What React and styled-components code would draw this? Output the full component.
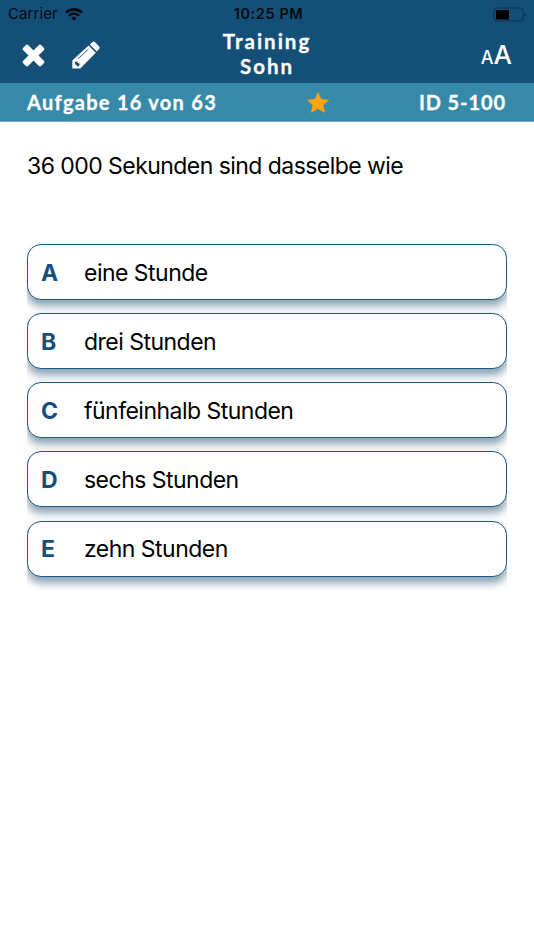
import React from 'react';
import styled, { createGlobalStyle } from 'styled-components';

const GlobalStyle = createGlobalStyle`
  * {
    box-sizing: border-box;
  }
  body {
    margin: 0;
    background: #fff;
    font-family: Inter, "Liberation Sans", sans-serif;
  }
`

const Screen = styled.div`
  min-height: 950px;
  background: #fff;
`
const Header = styled.header`
  height: 83px;
  background: #144f78;
`
const StatusBar = styled.div`
  display: grid;
  grid-template-columns: 1fr auto 1fr;
  align-items: center;
  height: 27px;
  padding: 0 7px 0 8px;
  color: #030a10;
  font-size: 15px;
  line-height: 28px;
`
const Carrier = styled.div`
  display: flex;
  align-items: center;
  gap: 7px;
  letter-spacing: 0.1px;
`
const Clock = styled.div`
  padding-left: 2px;
  font-weight: 600;
  font-size: 14.5px;
  letter-spacing: 0.6px;
`
const Battery = styled.svg`
  justify-self: end;
`
const NavBar = styled.div`
  display: grid;
  grid-template-columns: 1fr auto 1fr;
  height: 56px;
  padding: 0 22px;
`
const Tools = styled.div`
  display: flex;
  align-items: flex-start;
  padding-top: 14px;
  gap: 27px;
`
const Title = styled.h1`
  margin: 0;
  padding-top: 2px;
  color: #fff;
  font: 700 20.5px/25px Lato, sans-serif;
  letter-spacing: 2px;
  text-align: center;
  -webkit-text-stroke: 0.3px #fff;
`
const FontSize = styled.div`
  justify-self: end;
  padding-top: 10px;
  color: #fff;
  font-weight: 500;
  font-size: 26px;
  line-height: 36px;
  small {
    font-size: 18px;
  }
`
const InfoBar = styled.div`
  display: flex;
  align-items: center;
  justify-content: space-between;
  height: 39px;
  padding: 0 28px 0 27px;
  border-bottom: 1px solid #77aec2;
  background: #368aa8;
  color: #fff;
  font: 700 20px/38px Lato, sans-serif;
  letter-spacing: 1.28px;
  -webkit-text-stroke: 0.3px #fff;
`
const TaskId = styled.span`
  letter-spacing: 0.9px;
`
const Question = styled.p`
  margin: 0;
  padding: 29px 27px 0;
  height: 122px;
  font-size: 23px;
  line-height: 30px;
  letter-spacing: -0.55px;
`
const Answers = styled.ul`
  margin: 0 27px;
  padding: 0;
  overflow: hidden;
  list-style: none;
`
const Answer = styled.li`
  display: flex;
  align-items: center;
  height: 56px;
  margin-bottom: 13.15px;
  padding: 1px 0 0 13px;
  border: 1.5px solid #1b5a84;
  border-radius: 14px;
  background: #fff;
  box-shadow: 0 6px 8px rgba(20, 67, 100, 0.5);
  font-size: 23px;
  letter-spacing: -0.52px;
`
const Letter = styled.b`
  width: 43px;
  color: #144f7c;
  font-weight: 700;
`

const answers = [
  { id: 'A', text: 'eine Stunde' },
  { id: 'B', text: 'drei Stunden' },
  { id: 'C', text: 'fünfeinhalb Stunden' },
  { id: 'D', text: 'sechs Stunden' },
  { id: 'E', text: 'zehn Stunden' },
]

const WifiIcon = () => (
  <svg width="18" height="13" viewBox="0 0 18 13" fill="none" stroke="#030a10">
    <path d="M1 4.6a11.5 11.5 0 0 1 16 0" strokeWidth="2.6" />
    <path d="M3.9 7.7a7.3 7.3 0 0 1 10.2 0" strokeWidth="2.3" />
    <path d="M9 12.8 6.3 10.1a3.8 3.8 0 0 1 5.4 0z" fill="#030a10" stroke="none" />
  </svg>
)

const BatteryIcon = () => (
  <Battery width="34" height="15" viewBox="0 0 34 15">
    <rect x="1" y="1" width="29" height="13" rx="3.2" fill="none" stroke="#0d3552" strokeWidth="1.2" />
    <rect x="3" y="3" width="13" height="9.5" rx="1" fill="#000" />
    <path d="M31.5 5.5q1.6.6 1.6 2t-1.6 2z" fill="#0d3552" />
  </Battery>
)

const CloseIcon = () => (
  <svg width="23" height="29" viewBox="0 0 23 29" fill="#fff">
    <g transform="rotate(45 11.5 14.5)">
      <rect x="-1.3" y="10.9" width="25.6" height="7.2" rx="1.9" />
      <rect x="7.9" y="1.7" width="7.2" height="25.6" rx="1.9" />
    </g>
  </svg>
)

const PencilIcon = () => (
  <svg width="28" height="28" viewBox="0 0 28 28">
    <path d="M0.3 27.6V19.4L16.6 4.6 23.8 11.8 8.3 27.6z" fill="#fff" />
    <path d="M17.8 3.5 20.2 1.2Q21.6 0 23 1.2L27 5.2Q28.2 6.6 27 8L24.9 10.6z" fill="#fff" />
    <path d="M6.2 17.6 16.4 8.2" stroke="#144f78" strokeWidth="0.9" />
    <path d="M3 20.9 5.4 20.2 5.6 22 7.7 22.4 7.3 24.7 5.6 25.5 3 23z" fill="#144f78" />
  </svg>
)

const StarIcon = () => (
  <svg width="22" height="21" viewBox="0 0 22 21" fill="#fca510">
    <path d="M11 0.8 14 7.4 21.4 8.2 15.9 13.1 17.5 20.2 11 16.6 4.5 20.2 6.1 13.1 0.6 8.2 8 7.4z" stroke="#fca510" strokeWidth="0.8" strokeLinejoin="round" />
  </svg>
)

export default function App() {
  return (
    <Screen>
      <GlobalStyle />
      <Header>
        <StatusBar>
          <Carrier>Carrier <WifiIcon /></Carrier>
          <Clock>10:25 PM</Clock>
          <BatteryIcon />
        </StatusBar>
        <NavBar>
          <Tools>
            <CloseIcon />
            <PencilIcon />
          </Tools>
          <Title>Training<br />Sohn</Title>
          <FontSize><small>A</small>A</FontSize>
        </NavBar>
      </Header>
      <InfoBar>
        <span>Aufgabe 16 von 63</span>
        <StarIcon />
        <TaskId>ID 5-100</TaskId>
      </InfoBar>
      <Question>36 000 Sekunden sind dasselbe wie</Question>
      <Answers>
        {answers.map(a => (
          <Answer key={a.id}>
            <Letter>{a.id}</Letter>
            <span>{a.text}</span>
          </Answer>
        ))}
      </Answers>
    </Screen>
  )
}
